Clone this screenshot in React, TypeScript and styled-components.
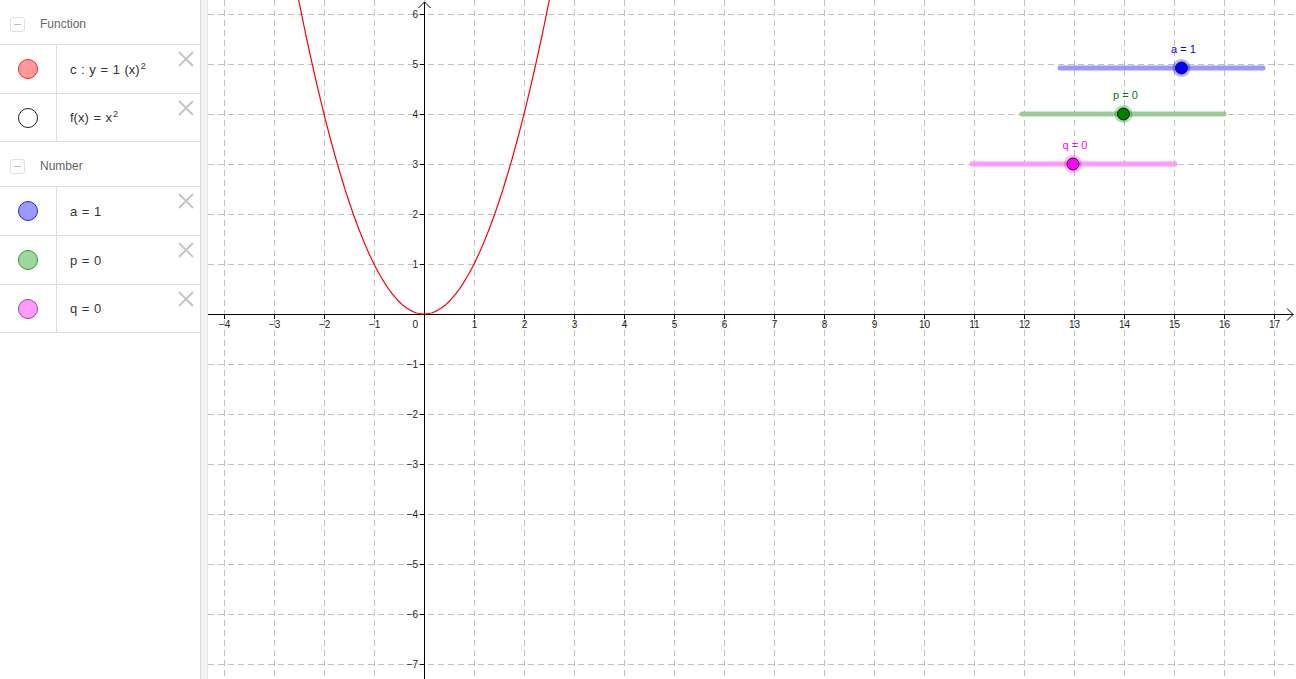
import React from "react";
import styled, { createGlobalStyle } from "styled-components";

const GlobalStyle = createGlobalStyle`
  html, body {
    margin: 0;
    padding: 0;
    overflow: hidden;
    background: #ffffff;
  }
  body {
    font-family: "Liberation Sans", Arial, sans-serif;
  }
`;

// origin of the coordinate system in page pixels, 50px per unit
const OX = 424;
const OY = 314;
const UNIT = 50;
const VIEW_LEFT = 208;
const VIEW_W = 1296 - VIEW_LEFT;
const VIEW_H = 679;

const sx = (x: number) => OX + x * UNIT;
const sy = (y: number) => OY - y * UNIT;

interface Item {
  id: string;
  fill: string;
  stroke: string;
  label: React.ReactNode;
}

interface Group {
  title: string;
  items: Item[];
}

const groups: Group[] = [
  {
    title: "Function",
    items: [
      {
        id: "c",
        fill: "#ff9a9a",
        stroke: "#ff2020",
        label: (
          <>
            c : y = 1 (x)<sup>2</sup>
          </>
        ),
      },
      {
        id: "f",
        fill: "#ffffff",
        stroke: "#222222",
        label: (
          <>
            f(x) = x<sup>2</sup>
          </>
        ),
      },
    ],
  },
  {
    title: "Number",
    items: [
      { id: "a", fill: "#9a9aff", stroke: "#2020ff", label: "a = 1" },
      { id: "p", fill: "#9dd89d", stroke: "#2a9a2a", label: "p = 0" },
      { id: "q", fill: "#ff9aff", stroke: "#a040a0", label: "q = 0" },
    ],
  },
];

interface Slider {
  name: string;
  value: number;
  color: string;
  line: string;
  x1: number;
  x2: number;
  y: number;
  px: number;
}

const sliders: Slider[] = [
  { name: "a", value: 1, color: "#0000ff", line: "#9999ff", x1: 1060, x2: 1263, y: 68, px: 1181.5 },
  { name: "p", value: 0, color: "#008000", line: "#99cc99", x1: 1022, x2: 1224, y: 114, px: 1123.5 },
  { name: "q", value: 0, color: "#ff00ff", line: "#ff99ff", x1: 972, x2: 1175, y: 164, px: 1073 },
];

const Page = styled.div`
  display: flex;
  width: 1296px;
  height: 679px;
  overflow: hidden;
`;

const AlgebraPanel = styled.div`
  width: 200px;
  flex: none;
  display: flex;
  flex-direction: column;
  background: #ffffff;
`;

const GroupHeader = styled.div`
  height: 44px;
  display: flex;
  align-items: center;
  padding: 4px 0 0 10px;
  box-sizing: border-box;
  gap: 15px;
  font-size: 12px;
  color: #666666;
`;

const Toggle = styled.span`
  width: 15px;
  height: 15px;
  box-sizing: border-box;
  border: 1px solid #e0e0e0;
  border-radius: 3px;
  display: flex;
  align-items: center;
  justify-content: center;

  &::after {
    content: "";
    width: 7px;
    height: 1px;
    background: #bdbdbd;
  }
`;

const Row = styled.div<{ $last: boolean }>`
  height: 49px;
  box-sizing: border-box;
  display: flex;
  border-top: 1px solid #dedede;
  border-bottom: ${(p) => (p.$last ? "1px solid #dedede" : "none")};
`;

const MarbleCell = styled.div`
  width: 56px;
  flex: none;
  display: flex;
  align-items: center;
  justify-content: center;
  border-right: 1px solid #dedede;
`;

const Marble = styled.span<{ $fill: string; $stroke: string }>`
  width: 20px;
  height: 20px;
  box-sizing: border-box;
  border-radius: 50%;
  background: ${(p) => p.$fill};
  border: 1px solid ${(p) => p.$stroke};
`;

const Definition = styled.div`
  flex: 1;
  display: flex;
  align-items: center;
  padding-left: 13px;
  font-size: 13px;
  color: #333333;
`;

const Formula = styled.span`
  white-space: pre;
  word-spacing: 1px;

  sup {
    font-size: 9px;
    vertical-align: 5px;
    line-height: 0;
    margin-left: 1px;
  }
`;

const DeleteButton = styled.span`
  width: 16px;
  height: 16px;
  margin: 6px 6px 0 0;
  flex: none;
`;

const Divider = styled.div`
  width: 8px;
  flex: none;
  box-sizing: border-box;
  background: #f3f3f3;
  border-left: 1px solid #dcdcdc;
  border-right: 1px solid #e6e6e6;
`;

const GraphicsView = styled.div`
  flex: 1;
  background: #ffffff;
`;

const Canvas = styled.svg`
  display: block;
  font-family: "Liberation Sans", Arial, sans-serif;
`;

const CloseIcon = () => (
  <svg width="16" height="16" viewBox="0 0 16 16">
    <path d="M1 1 L15 15 M15 1 L1 15" stroke="#c6c6c6" strokeWidth="2" />
  </svg>
);

const range = (a: number, b: number) => {
  const out: number[] = [];
  for (let i = a; i <= b; i++) out.push(i);
  return out;
};

const label = (n: number) => (n < 0 ? `\u2212${-n}` : `${n}`);

const parabola = () => {
  const pts: string[] = [];
  for (let x = -2.6; x <= 2.6001; x += 0.02) {
    pts.push(`${sx(x).toFixed(2)},${sy(x * x).toFixed(2)}`);
  }
  return "M" + pts.join(" L");
};

const Graph = () => {
  const xs = range(-4, 17);
  const ys = range(-7, 6);
  return (
    <Canvas width={VIEW_W} height={VIEW_H} viewBox={`${VIEW_LEFT} 0 ${VIEW_W} ${VIEW_H}`}>
      <g stroke="#c0c0c0" strokeWidth="1" strokeDasharray="6 4">
        {xs.map((x) => (
          <line key={`gx${x}`} x1={sx(x) + 0.5} x2={sx(x) + 0.5} y1={0} y2={VIEW_H} />
        ))}
        {ys.map((y) => (
          <line key={`gy${y}`} x1={VIEW_LEFT} x2={1296} y1={sy(y) + 0.5} y2={sy(y) + 0.5} />
        ))}
      </g>

      <g stroke="#000000" strokeWidth="1" fill="none">
        <line x1={VIEW_LEFT} x2={1293} y1={OY + 0.5} y2={OY + 0.5} />
        <path d={`M1287 ${OY - 5.5} L1293 ${OY + 0.5} L1287 ${OY + 6.5}`} />
        <line x1={OX + 0.5} x2={OX + 0.5} y1={2} y2={VIEW_H} />
        <path d={`M${OX - 5.5} 8 L${OX + 0.5} 2 L${OX + 6.5} 8`} />
        {xs
          .filter((x) => x !== 0)
          .map((x) => (
            <line key={`tx${x}`} x1={sx(x) + 0.5} x2={sx(x) + 0.5} y1={OY} y2={OY + 5} />
          ))}
        {ys
          .filter((y) => y !== 0)
          .map((y) => (
            <line key={`ty${y}`} x1={OX - 4} x2={OX} y1={sy(y) + 0.5} y2={sy(y) + 0.5} />
          ))}
      </g>

      <g fontSize="10" fill="#222222">
        {xs
          .filter((x) => x !== 0)
          .map((x) => (
            <text key={`lx${x}`} x={sx(x) + 0.5} y={328} textAnchor="middle">
              {label(x)}
            </text>
          ))}
        <text x={418} y={328} textAnchor="end">
          0
        </text>
        {ys
          .filter((y) => y !== 0)
          .map((y) => (
            <text key={`ly${y}`} x={418} y={sy(y) + 4} textAnchor="end">
              {label(y)}
            </text>
          ))}
      </g>

      <path d={parabola()} stroke="#ff0000" strokeWidth="1.2" fill="none" />

      {sliders.map((s) => (
        <g key={s.name}>
          <line x1={s.x1} x2={s.x2} y1={s.y} y2={s.y} stroke={s.line} strokeWidth="5" strokeLinecap="round" />
          <circle cx={s.px} cy={s.y} r={9} fill={s.color} opacity={0.3} />
          <circle cx={s.px} cy={s.y} r={6} fill={s.color} stroke="#1a1a1a" strokeWidth="1" />
          <text x={s.px + 2} y={s.y - 15} textAnchor="middle" fontSize="11" fill={s.color}>
            {`${s.name} = ${s.value}`}
          </text>
        </g>
      ))}
    </Canvas>
  );
};

const App = () => (
  <>
    <GlobalStyle />
    <Page>
      <AlgebraPanel>
        {groups.map((g) => (
          <div key={g.title}>
            <GroupHeader>
              <Toggle />
              {g.title}
            </GroupHeader>
            {g.items.map((it, i) => (
              <Row key={it.id} $last={i === g.items.length - 1}>
                <MarbleCell>
                  <Marble $fill={it.fill} $stroke={it.stroke} />
                </MarbleCell>
                <Definition>
                  <Formula>{it.label}</Formula>
                </Definition>
                <DeleteButton>
                  <CloseIcon />
                </DeleteButton>
              </Row>
            ))}
          </div>
        ))}
      </AlgebraPanel>
      <Divider />
      <GraphicsView>
        <Graph />
      </GraphicsView>
    </Page>
  </>
);

export default App;
